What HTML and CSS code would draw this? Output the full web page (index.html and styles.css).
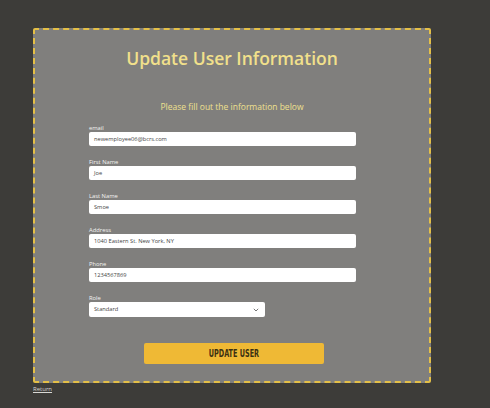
FILE: index.html
```html
<!DOCTYPE html>
<html>
<head>
<meta charset="utf-8">
<link rel="stylesheet" href="styles.css">
</head>
<body>
<div class="card">
  <h1 class="title">Update User Information</h1>
  <p class="subtitle">Please fill out the information below</p>
  <form class="form">
    <div class="field">
      <label class="label">email</label>
      <div class="input">newemployee06@bcrs.com</div>
    </div>
    <div class="field">
      <label class="label">First Name</label>
      <div class="input">Joe</div>
    </div>
    <div class="field">
      <label class="label">Last Name</label>
      <div class="input">Smoe</div>
    </div>
    <div class="field">
      <label class="label">Address</label>
      <div class="input">1040 Eastern St. New York, NY</div>
    </div>
    <div class="field">
      <label class="label">Phone</label>
      <div class="input">1234567869</div>
    </div>
    <div class="field">
      <label class="label">Role</label>
      <div class="input select"><span>Standard</span>
        <svg class="chev" width="6" height="4" viewBox="0 0 6 4"><path d="M0.8 0.8 L3 3 L5.2 0.8" fill="none" stroke="#666" stroke-width="0.9"/></svg>
      </div>
    </div>
    <div class="actions">
      <div class="button"><span class="button-text">UPDATE USER</span></div>
    </div>
  </form>
</div>
<a class="return" href="#">Return</a>
</body>
</html>
```

FILE: styles.css
```css
html, body {
  margin: 0;
  padding: 0;
  background: #3d3c39;
}
body {
  padding: 28px 0 0 33px;
  font-family: "Open Sans", "Noto Sans", sans-serif;
}
.card {
  box-sizing: border-box;
  width: 398px;
  height: 355px;
  border: 2px dashed #e4bf47;
  border-radius: 2px;
  background: #807f7d;
  padding: 0 0 0 54px;
}
.title {
  margin: 15px 0 0 -54px;
  text-align: center;
  font-size: 17.5px;
  line-height: 26px;
  font-weight: 600;
  color: #f1e08b;
}
.subtitle {
  margin: 30px 0 0 -54px;
  text-align: center;
  font-size: 8.5px;
  line-height: 12px;
  color: #efe08e;
}
.form {
  margin-top: 11px;
  display: flex;
  flex-direction: column;
}
.field {
  display: flex;
  flex-direction: column;
  margin-bottom: 12px;
}
.label {
  font-size: 5.8px;
  line-height: 8px;
  color: #f4f4f2;
}
.input {
  box-sizing: border-box;
  width: 267px;
  height: 14px;
  background: #fff;
  border-radius: 2px;
  padding: 0 5px;
  font-size: 5.7px;
  line-height: 14px;
  color: #444;
}
.select {
  width: 176px;
  height: 15px;
  line-height: 15px;
  display: flex;
  justify-content: space-between;
  align-items: center;
  padding-right: 6px;
}
.actions {
  margin-top: 14px;
  width: 290px;
  display: flex;
  justify-content: center;
}
.button {
  width: 180px;
  height: 21px;
  background: #efb935;
  border-radius: 2px;
  display: flex;
  justify-content: center;
  align-items: center;
}
.button-text {
  display: inline-block;
  font-family: "DejaVu Sans Condensed", "DejaVu Sans", sans-serif;
  font-weight: bold;
  font-size: 10px;
  line-height: 12px;
  color: #3b3012;
  transform: scaleX(0.72);
}
.return {
  display: block;
  width: max-content;
  margin-top: 2px;
  font-size: 6px;
  line-height: 8px;
  color: #d8d8d4;
  text-decoration: underline;
}
```
